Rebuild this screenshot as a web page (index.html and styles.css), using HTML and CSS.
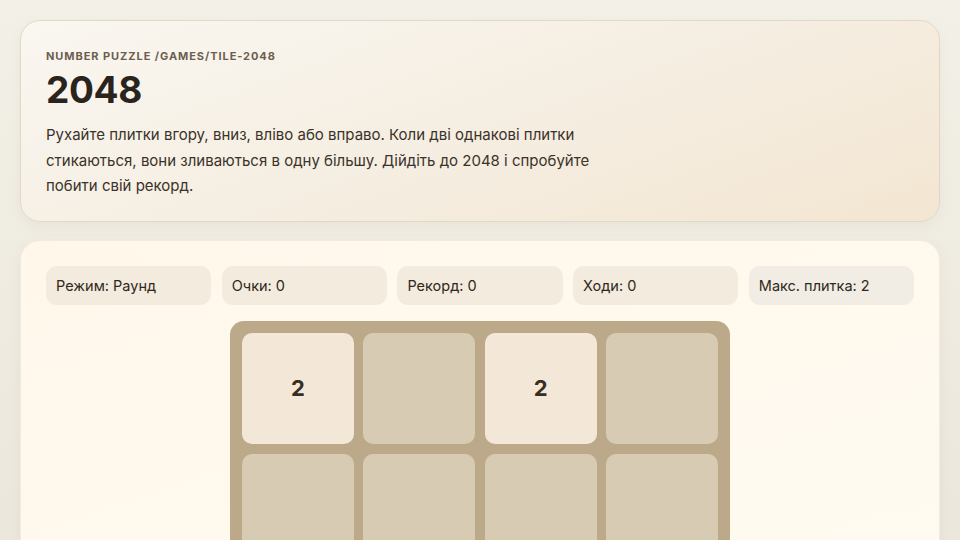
FILE: index.html
```html
<!DOCTYPE html>
<html lang="uk">
<head>
<meta charset="utf-8">
<title>2048</title>
<link rel="stylesheet" href="styles.css">
</head>
<body>
<div class="page">
  <header class="hero">
    <div class="eyebrow">NUMBER PUZZLE /GAMES/TILE-2048</div>
    <h1 class="title">2048</h1>
    <p class="lead">Рухайте плитки вгору, вниз, вліво або вправо. Коли дві однакові плитки стикаються, вони зливаються в одну більшу. Дійдіть до 2048 і спробуйте побити свій рекорд.</p>
  </header>
  <main class="game">
    <div class="stats">
      <div class="stat">Режим: Раунд</div>
      <div class="stat">Очки: 0</div>
      <div class="stat">Рекорд: 0</div>
      <div class="stat">Ходи: 0</div>
      <div class="stat">Макс. плитка: 2</div>
    </div>
    <div class="board">
      <div class="tile filled">2</div>
      <div class="tile"></div>
      <div class="tile filled">2</div>
      <div class="tile"></div>
      <div class="tile"></div>
      <div class="tile"></div>
      <div class="tile"></div>
      <div class="tile"></div>
      <div class="tile"></div>
      <div class="tile"></div>
      <div class="tile"></div>
      <div class="tile"></div>
      <div class="tile"></div>
      <div class="tile"></div>
      <div class="tile"></div>
      <div class="tile"></div>
    </div>
  </main>
</div>
</body>
</html>
```
FILE: styles.css
```css
* { box-sizing: border-box; }
html, body { margin: 0; height: 100%; }
body {
  font-family: Inter, "Noto Sans", sans-serif;
  background: linear-gradient(180deg, #f3f0e7 0%, #ebe7dc 100%);
  color: #2b241d;
  overflow: hidden;
}
.page {
  padding: 20px;
  display: flex;
  flex-direction: column;
  gap: 18px;
}
.hero {
  border: 1px solid #e2d8c8;
  border-radius: 20px;
  background: linear-gradient(160deg, #faf7f1 0%, #f5eee2 50%, #f3e6d2 100%);
  padding: 27px 25px 22px;
  box-shadow: 0 4px 14px rgba(120, 100, 70, 0.06);
}
.eyebrow {
  font-size: 11px;
  font-weight: 700;
  letter-spacing: 0.085em;
  color: #6b5e50;
  line-height: 16px;
}
.title {
  margin: 4px 0 0;
  font-size: 37px;
  font-weight: 700;
  line-height: 44px;
  color: #2b241d;
  letter-spacing: -0.01em;
}
.lead {
  margin: 10px 0 0;
  font-size: 15px;
  line-height: 25.5px;
  max-width: 590px;
  color: #3b3229;
}
.game {
  border-radius: 20px;
  background: linear-gradient(160deg, #fff7ea 0%, #fffaf0 60%, #fffbf4 100%);
  padding: 25px;
  box-shadow: 0 4px 14px rgba(120, 100, 70, 0.06);
  border: 1px solid #f2ebdf;
  min-height: 320px;
}
.stats {
  display: grid;
  grid-template-columns: repeat(5, 1fr);
  gap: 10.5px;
}
.stat {
  height: 39px;
  border-radius: 11px;
  background: #f3ebde;
  display: flex;
  align-items: center;
  padding: 0 10px;
  font-size: 14.5px;
  color: #2f2820;
}
.stat:last-child { background: #f2ede4; }
.board {
  margin: 16px auto 0;
  width: 500px;
  background: #bba98a;
  border-radius: 14px;
  padding: 12px;
  display: grid;
  grid-template-columns: repeat(4, 1fr);
  gap: 10px 9.3px;
}
.tile {
  height: 111px;
  border-radius: 10px;
  background: #d8cbb3;
  display: flex;
  align-items: center;
  justify-content: center;
  font-size: 22px;
  font-weight: 700;
  color: #3a2e22;
}
.tile.filled { background: #f3e8d8; }
```
